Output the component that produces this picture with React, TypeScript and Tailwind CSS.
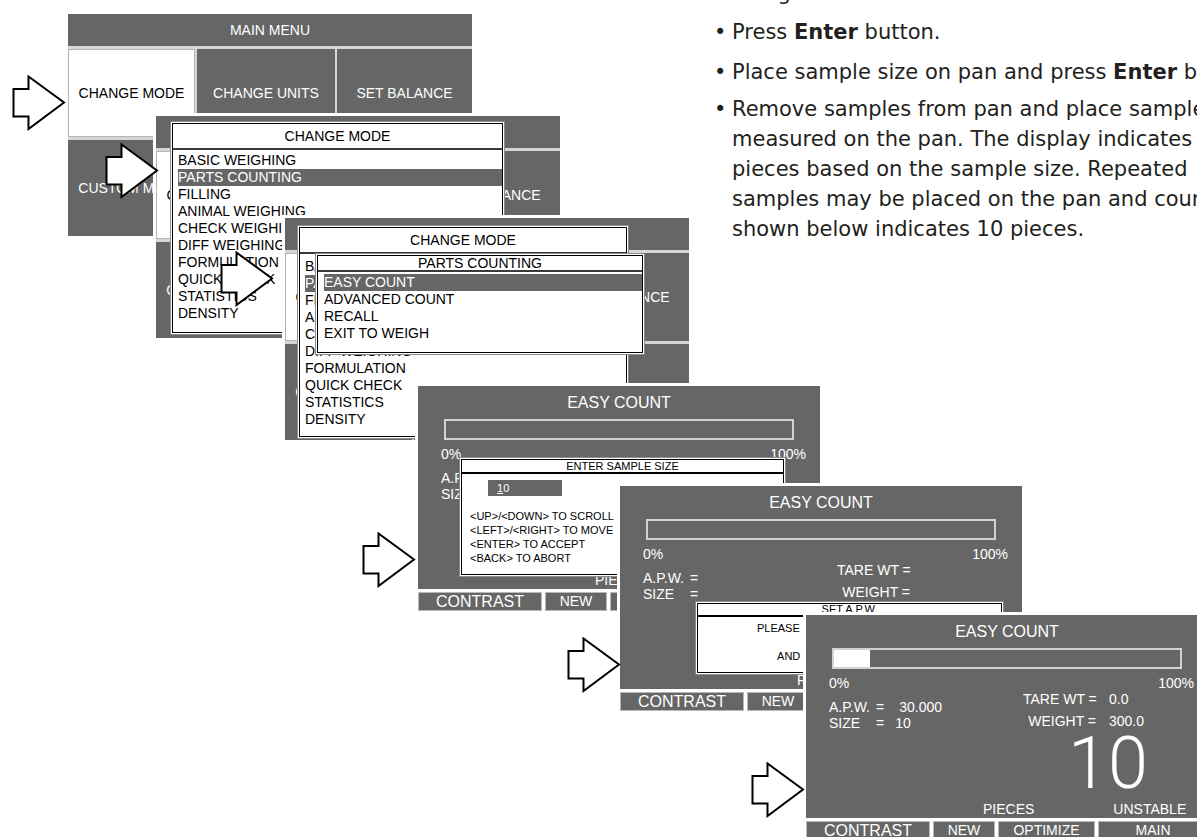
import type { ReactNode } from "react";

type Pos = { className: string; children?: ReactNode };

function Arrow({ className }: { className: string }) {
  return (
    <svg
      aria-hidden
      className={`absolute ${className}`}
      width="54"
      height="56"
      viewBox="0 0 54 56"
    >
      <path
        d="M1.5 14H16.5V1.5L52 27.5L16.5 54V41.5H1.5Z"
        fill="#fff"
        stroke="#000"
        strokeWidth="2"
      />
    </svg>
  );
}

// white frame round each captured display
function Shot({ className, children }: Pos) {
  return (
    <div className={`absolute box-content border-[3px] border-white ${className}`}>
      {children}
    </div>
  );
}

function MenuCell({ children, active }: { children: ReactNode; active?: boolean }) {
  return (
    <div
      className={`flex items-center justify-center overflow-hidden whitespace-nowrap ${
        active ? "border border-[#b4b4b4] bg-white text-black" : "bg-[#666] text-white"
      }`}
    >
      {children}
    </div>
  );
}

function MainMenu() {
  return (
    <div className="flex h-full flex-col gap-[3px] bg-[#d6d6d6] text-[14px]">
      <div className="flex h-[32px] shrink-0 items-center justify-center bg-[#666] text-white">
        MAIN MENU
      </div>
      <div className="grid h-[88px] shrink-0 grid-cols-[127px_138px_1fr] gap-[2px]">
        <MenuCell active>CHANGE MODE</MenuCell>
        <MenuCell>CHANGE UNITS</MenuCell>
        <MenuCell>SET BALANCE</MenuCell>
      </div>
      <div className="grid flex-1 grid-cols-[127px_138px_1fr] gap-[2px]">
        <MenuCell>CUSTOM MODE</MenuCell>
        <MenuCell>CALIBRATE</MenuCell>
        <div className="flex justify-center bg-[#666] pt-[34px] text-white">RESULTS</div>
      </div>
    </div>
  );
}

const modes = [
  "BASIC WEIGHING",
  "PARTS COUNTING",
  "FILLING",
  "ANIMAL WEIGHING",
  "CHECK WEIGHING",
  "DIFF WEIGHING",
  "FORMULATION",
  "QUICK CHECK",
  "STATISTICS",
  "DENSITY",
];

const countModes = ["EASY COUNT", "ADVANCED COUNT", "RECALL", "EXIT TO WEIGH"];

type ListDialogProps = {
  title: string;
  items: string[];
  active: string;
  className: string;
  titleClass: string;
  listClass: string;
};

function ListDialog({ title, items, active, className, titleClass, listClass }: ListDialogProps) {
  return (
    <div
      className={`absolute flex flex-col border border-black bg-white text-[14px] text-black shadow-[0_0_0_1px_#fff,0_0_0_2px_#8c8c8c] ${className}`}
    >
      <div className={`flex shrink-0 items-center justify-center border-b-2 border-[#3a3a3a] ${titleClass}`}>
        {title}
      </div>
      <div className={`flex flex-col ${listClass}`}>
        {items.map((item) => (
          <div
            key={item}
            className={`h-[17px] whitespace-nowrap leading-[17px] ${
              item === active ? "bg-[#666] text-white" : ""
            }`}
          >
            {item}
          </div>
        ))}
      </div>
    </div>
  );
}

type EasyCountProps = {
  fill?: number;
  apw?: string;
  size?: string;
  tare?: string;
  weight?: string;
  count?: string;
  children?: ReactNode;
};

function EasyCount({ fill = 0, apw, size, tare, weight, count, children }: EasyCountProps) {
  return (
    <div className="relative flex h-full flex-col gap-[3px] bg-white text-[14px] text-white">
      <div className="flex h-[203px] shrink-0 flex-col bg-[#666] pb-[1px]">
        <div className="flex h-[33px] shrink-0 items-center justify-center text-[16px]">EASY COUNT</div>
        <div className="mx-[26px] h-[21px] shrink-0 border-2 border-[#d2d2d2]">
          <div className="h-full bg-white" style={{ width: `${fill}px` }} />
        </div>
        <div className="flex h-[28px] shrink-0 items-center justify-between pl-[23px] pr-[14px]">
          <span>0%</span>
          <span>100%</span>
        </div>
        <div className="grid flex-1 grid-cols-[217px_1fr] leading-[16px]">
          <div className="flex flex-col pl-[23px] pt-[2px]">
            <div className="grid grid-cols-[47px_auto_1fr]">
              <span>A.P.W.</span>
              <span>=</span>
              <span className="pl-[15px]">{apw}</span>
            </div>
            <div className="grid grid-cols-[47px_auto_1fr]">
              <span>SIZE</span>
              <span>=</span>
              <span className="pl-[11px]">{size}</span>
            </div>
          </div>
          <div className="-mt-[6px] flex flex-col">
            <div className="flex">
              <span className="w-[73px] whitespace-nowrap text-right">TARE WT =</span>
              <span className="pl-[13px]">{tare}</span>
            </div>
            <div className="mt-[6px] flex">
              <span className="w-[73px] whitespace-nowrap text-right">WEIGHT =</span>
              <span className="pl-[13px]">{weight}</span>
            </div>
            <div className="-mt-[1.5px] h-[72px] pl-[45px] font-['Roboto',sans-serif] text-[72px] font-light leading-[72px]">
              {count}
            </div>
          </div>
        </div>
        <div className="flex h-[16px] shrink-0 items-center pl-[177px]">
          <span>PIECES</span>
          <span className="ml-[79px]">UNSTABLE</span>
        </div>
      </div>
      <div className="flex h-[19px] shrink-0 gap-[3px]">
        <div className="flex w-[124px] items-center justify-center border border-[#b8b8b8] bg-[#666] text-[16px]">
          CONTRAST
        </div>
        <div className="flex w-[62px] items-center justify-center border border-[#b8b8b8] bg-[#666]">NEW</div>
        <div className="flex w-[97px] items-center justify-center border border-[#b8b8b8] bg-[#666]">
          OPTIMIZE
        </div>
        <div className="flex flex-1 items-center justify-center border border-[#b8b8b8] bg-[#666]">MAIN</div>
      </div>
      {children}
    </div>
  );
}

const dialogFrame = "border border-black bg-white text-[11px] text-black shadow-[0_0_0_1px_#fff,0_0_0_2px_#8c8c8c]";

function SampleSizeDialog() {
  return (
    <div className={`absolute left-[43px] top-[73px] flex h-[116px] w-[323px] flex-col ${dialogFrame}`}>
      <div className="flex h-[14px] shrink-0 items-center justify-center border-b-2 border-black">
        ENTER SAMPLE SIZE
      </div>
      <div className="ml-[26px] mt-[6px] flex h-[16px] w-[74px] shrink-0 items-center bg-[#666] pl-[9px] text-white">
        <span className="underline">1</span>0
      </div>
      <div className="mt-[13px] flex flex-col whitespace-nowrap pl-[8px] leading-[14px]">
        <span>&lt;UP&gt;/&lt;DOWN&gt; TO SCROLL</span>
        <span>&lt;LEFT&gt;/&lt;RIGHT&gt; TO MOVE</span>
        <span>&lt;ENTER&gt; TO ACCEPT</span>
        <span>&lt;BACK&gt; TO ABORT</span>
      </div>
    </div>
  );
}

function SetApwDialog() {
  return (
    <div className={`absolute left-[77px] top-[117px] flex h-[70px] w-[305px] flex-col ${dialogFrame}`}>
      <div className="flex h-[13px] shrink-0 items-end justify-center border-b-2 border-black leading-[11px]">
        SET A.P.W.
      </div>
      <div className="mt-[4px] flex flex-col items-center whitespace-pre leading-[14px]">
        <span>PLEASE PLACE 10 PIECES ON PAN</span>
        <span className="mt-[14px]">AND  PRESS &lt;ENTER&gt; KEY</span>
      </div>
    </div>
  );
}

function Bullet({ className, children }: Pos) {
  return (
    <div className={`flex ${className}`}>
      <span className="w-[18px] shrink-0">•</span>
      <div className="flex flex-col">{children}</div>
    </div>
  );
}

export default function App() {
  return (
    <div className="relative h-[837px] w-[1197px] overflow-hidden bg-white font-['Liberation_Sans',Arial,sans-serif]">
      <div className="-mt-[22px] ml-[714px] flex flex-col whitespace-nowrap font-['DejaVu_Sans',sans-serif] text-[21px] leading-[30px] text-[#231f20]">
        <p className="pl-[18px]">Using the arrow buttons enter the number</p>
        <Bullet className="mt-[9px]">
          <span>
            Press <b>Enter</b> button.
          </span>
        </Bullet>
        <Bullet className="mt-[10px]">
          <span>
            Place sample size on pan and press <b>Enter</b> button.
          </span>
        </Bullet>
        <Bullet className="mt-[7px]">
          <span>Remove samples from pan and place samples to be</span>
          <span>measured on the pan. The display indicates the number of</span>
          <span>pieces based on the sample size. Repeated</span>
          <span>samples may be placed on the pan and counted. The display</span>
          <span>shown below indicates 10 pieces.</span>
        </Bullet>
      </div>

      <Shot className="left-[65px] top-[11px] h-[222px] w-[404px]">
        <MainMenu />
      </Shot>

      <Shot className="left-[153px] top-[113px] h-[222px] w-[404px]">
        <MainMenu />
        <ListDialog
          title="CHANGE MODE"
          items={modes}
          active="PARTS COUNTING"
          className="left-[16px] top-[7px] h-[210px] w-[331px]"
          titleClass="h-[26px]"
          listClass="pt-[2px] pl-[5px]"
        />
      </Shot>

      <Shot className="left-[282px] top-[215px] h-[222px] w-[404px]">
        <MainMenu />
        <ListDialog
          title="CHANGE MODE"
          items={modes}
          active="PARTS COUNTING"
          className="left-[14px] top-[9px] h-[210px] w-[328px]"
          titleClass="h-[26px]"
          listClass="pt-[4px] pl-[5px]"
        />
        <ListDialog
          title="PARTS COUNTING"
          items={countModes}
          active="EASY COUNT"
          className="left-[32px] top-[37px] h-[98px] w-[326px]"
          titleClass="h-[16px]"
          listClass="pt-[2px] pl-[6px]"
        />
      </Shot>

      <Shot className="left-[415px] top-[383px] h-[225px] w-[402px]">
        <EasyCount>
          <SampleSizeDialog />
        </EasyCount>
      </Shot>

      <Shot className="left-[617px] top-[483px] h-[225px] w-[402px]">
        <EasyCount>
          <SetApwDialog />
        </EasyCount>
      </Shot>

      <Shot className="left-[803px] top-[612px] h-[225px] w-[402px]">
        <EasyCount fill={36} apw="30.000" size="10" tare="0.0" weight="300.0" count="10" />
      </Shot>

      <Arrow className="left-[12px] top-[75px]" />
      <Arrow className="left-[105px] top-[143px]" />
      <Arrow className="left-[220px] top-[251px]" />
      <Arrow className="left-[362px] top-[532px]" />
      <Arrow className="left-[567px] top-[637px]" />
      <Arrow className="left-[751px] top-[762px]" />
    </div>
  );
}
